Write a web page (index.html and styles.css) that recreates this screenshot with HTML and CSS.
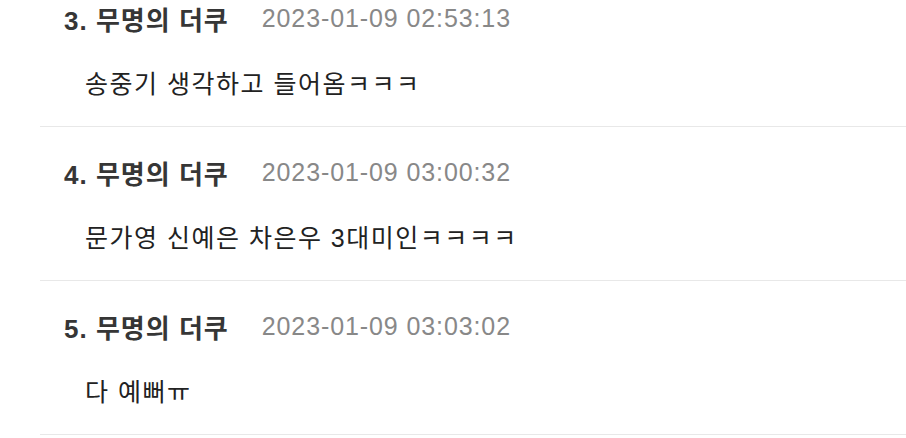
FILE: index.html
```html
<!DOCTYPE html>
<html lang="ko">
<head>
  <meta charset="UTF-8" />
  <title>댓글</title>
  <link rel="stylesheet" href="styles.css">
</head>
<body>
  <ul id="commentList">
    <li class="comment">
      <div class="commentHead">
        <span class="author">3. 무명의 더쿠</span>
        <span class="date">2023-01-09 02:53:13</span>
      </div>
      <p class="commentBody">송중기 생각하고 들어옴ㅋㅋㅋ</p>
    </li>
    <li class="comment">
      <div class="commentHead">
        <span class="author">4. 무명의 더쿠</span>
        <span class="date">2023-01-09 03:00:32</span>
      </div>
      <p class="commentBody">문가영 신예은 차은우 3대미인ㅋㅋㅋㅋ</p>
    </li>
    <li class="comment">
      <div class="commentHead">
        <span class="author">5. 무명의 더쿠</span>
        <span class="date">2023-01-09 03:03:02</span>
      </div>
      <p class="commentBody">다 예뻐ㅠ</p>
    </li>
  </ul>
</body>
</html>
```

FILE: styles.css
```css
body {
  font-family: "Liberation Sans", "Noto Sans CJK KR", sans-serif;
  background-color: #fff;
  margin: 0;
  overflow: hidden;
}
#commentList {
  list-style: none;
  margin: 0 0 0 40px;
  padding: 0;
}
.comment {
  padding: 27px 0 24px 24px;
  border-bottom: 1px solid #e8e8e8;
}
.comment:first-child {
  padding-top: 0;
}
.commentHead {
  display: flex;
  align-items: center;
  gap: 33px;
  height: 36px;
}
.author {
  font-size: 26px;
  font-weight: bold;
  letter-spacing: 1px;
  color: #363636;
}
.date {
  font-size: 25px;
  letter-spacing: 0.9px;
  color: #888;
}
.commentBody {
  margin: 30px 0 0 21px;
  font-size: 25px;
  letter-spacing: 1.5px;
  line-height: 36px;
  color: #222;
}
```
